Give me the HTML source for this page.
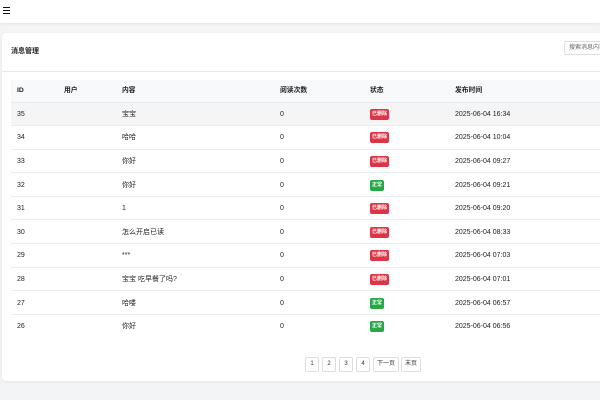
<!DOCTYPE html>
<html><head><meta charset="utf-8"><style>
*{margin:0;padding:0;box-sizing:border-box}
body{width:600px;height:400px;overflow:hidden;background:#f3f4f6;font-family:"Liberation Sans","Noto Sans CJK SC",sans-serif;font-size:7px;color:#222;position:relative}
.top{position:absolute;left:0;top:0;width:600px;height:23px;background:#fff;box-shadow:0 1px 3px rgba(0,0,0,.08)}
.ham{position:absolute;left:3px;top:7px;width:7px}
.ham i{display:block;height:1.3px;background:#111;margin-bottom:1.6px}
.card{position:absolute;left:2px;top:33px;width:610px;height:348px;background:#fff;border-radius:4px;box-shadow:0 1px 3px rgba(0,0,0,.06)}
.title{position:absolute;left:9px;top:14px;font-size:7px;line-height:10px;font-weight:bold}
.search{position:absolute;left:562px;top:8px;width:60px;height:14px;border:1px solid #ddd;border-radius:2px;font-size:6px;line-height:8px;color:#666;padding:2px 4px;white-space:nowrap;overflow:hidden}
.div{position:absolute;left:0;top:38px;width:100%;height:1px;background:#e8e8e8}
table{position:absolute;left:9px;top:47px;width:600px;border-collapse:collapse}
th{height:22px;background:#f8f9fa;text-align:left;font-weight:bold;font-size:6.8px}
td{height:23.6px;border-top:1px solid #e9ecef;font-size:7px;padding-top:1px!important}
th,td{padding:0;vertical-align:middle;line-height:9px;white-space:nowrap}
tr.h td{background:#f5f5f5}
.c1{width:53px;padding-left:6px!important}.c2{width:58px}.c3{width:158px}.c4{width:90px}.c5{width:85px}
.b{display:inline-block;vertical-align:middle;color:#fff;font-size:5px;font-weight:bold;padding:2px 2px;border-radius:2px;line-height:7px}
.r{background:#dc3545}.g{background:#28a745}
.pg{position:absolute;top:357px;height:15px;border:1px solid #ddd;border-radius:2px;background:#fff;font-size:6px;text-align:center;line-height:13px;color:#333}
</style></head><body>
<div class="top"><div class="ham"><i></i><i></i><i></i></div></div>
<div class="card">
<div class="title">消息管理</div>
<div class="search">搜索消息内容</div>
<div class="div"></div>
<table>
<tr><th class="c1">ID</th><th class="c2">用户</th><th class="c3">内容</th><th class="c4">阅读次数</th><th class="c5">状态</th><th>发布时间</th></tr>
<tr class="h"><td class="c1">35</td><td></td><td>宝宝</td><td>0</td><td><span class="b r">已删除</span></td><td>2025-06-04 16:34</td></tr>
<tr><td class="c1">34</td><td></td><td>哈哈</td><td>0</td><td><span class="b r">已删除</span></td><td>2025-06-04 10:04</td></tr>
<tr><td class="c1">33</td><td></td><td>你好</td><td>0</td><td><span class="b r">已删除</span></td><td>2025-06-04 09:27</td></tr>
<tr><td class="c1">32</td><td></td><td>你好</td><td>0</td><td><span class="b g">正常</span></td><td>2025-06-04 09:21</td></tr>
<tr><td class="c1">31</td><td></td><td>1</td><td>0</td><td><span class="b r">已删除</span></td><td>2025-06-04 09:20</td></tr>
<tr><td class="c1">30</td><td></td><td>怎么开启已读</td><td>0</td><td><span class="b r">已删除</span></td><td>2025-06-04 08:33</td></tr>
<tr><td class="c1">29</td><td></td><td>***</td><td>0</td><td><span class="b r">已删除</span></td><td>2025-06-04 07:03</td></tr>
<tr><td class="c1">28</td><td></td><td>宝宝 吃早餐了吗?</td><td>0</td><td><span class="b r">已删除</span></td><td>2025-06-04 07:01</td></tr>
<tr><td class="c1">27</td><td></td><td>哈喽</td><td>0</td><td><span class="b g">正常</span></td><td>2025-06-04 06:57</td></tr>
<tr><td class="c1">26</td><td></td><td>你好</td><td>0</td><td><span class="b g">正常</span></td><td>2025-06-04 06:56</td></tr>
</table>
</div>
<div class="pg" style="left:305px;width:14px">1</div>
<div class="pg" style="left:322px;width:14px">2</div>
<div class="pg" style="left:339px;width:14px">3</div>
<div class="pg" style="left:356px;width:14px">4</div>
<div class="pg" style="left:373px;width:26px">下一页</div>
<div class="pg" style="left:401px;width:20px">末页</div>
</body></html>
